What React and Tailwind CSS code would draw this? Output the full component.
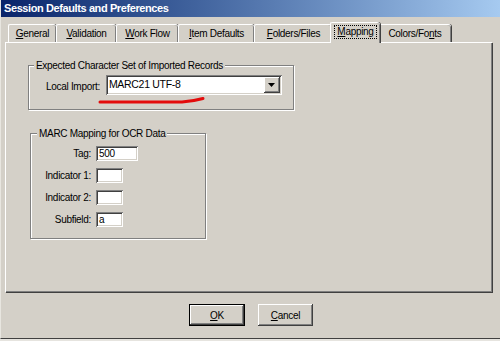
const raised = 'shadow-[inset_-1px_-1px_#404040,inset_1px_1px_#ffffff,inset_-2px_-2px_#808080,inset_2px_2px_#d4d0c8]';
const sunken = 'shadow-[inset_1px_1px_#808080,inset_-1px_-1px_#ffffff,inset_2px_2px_#404040,inset_-2px_-2px_#d4d0c8]';

const tabs = [
  { pre: '', key: 'G', post: 'eneral', w: 'w-[48px]' },
  { pre: '', key: 'V', post: 'alidation', w: 'w-[60px]' },
  { pre: '', key: 'W', post: 'ork Flow', w: 'w-[62px]' },
  { pre: '', key: 'I', post: 'tem Defaults', w: 'w-[76px]' },
  { pre: '', key: 'F', post: 'olders/Files', w: 'w-[78px]' },
  { pre: '', key: 'M', post: 'apping', w: 'w-[50px]', active: true },
  { pre: 'Colors/Fo', key: 'n', post: 'ts', w: 'w-[73px]' },
];

function Tab({ t }) {
  if (t.active) {
    return (
      <div className={`${t.w} -mx-[2px] h-[21px] -mb-px relative z-10 bg-[#d4d0c8] border-t border-l border-white rounded-tl-[2px] rounded-tr-[3px] shadow-[inset_-1px_0_#808080,1px_0_#404040] flex items-center justify-center pb-[2px]`}>
        <span className="outline-1 outline-dotted outline-black px-[2px] leading-[12px]">
          {t.pre}<span className="underline">{t.key}</span>{t.post}
        </span>
      </div>
    );
  }
  return (
    <div className={`${t.w} h-[18px] border-t border-l border-white rounded-tl-[2px] rounded-tr-[3px] shadow-[inset_-1px_0_#808080,1px_0_#404040] flex items-center justify-center`}>
      <span>{t.pre}<span className="underline">{t.key}</span>{t.post}</span>
    </div>
  );
}

function Field({ label, value, w }) {
  return (
    <div className="flex items-center h-[15px]">
      <div className="w-[65px] text-right pr-[5px]">{label}</div>
      <div className={`${w} h-[15px] bg-white ${sunken} pl-[3px] flex items-center`}>{value}</div>
    </div>
  );
}

export default function App() {
  return (
    <div className="w-[500px] h-[341px] bg-[#e6e4df] overflow-hidden font-['Liberation_Sans',Arial,sans-serif] text-[10px] tracking-[-0.3px] text-black">
      <div className="h-[339px] bg-[#d4d0c8] border-l border-l-[#e8e6e0] border-b border-b-[#404040] flex flex-col">
        {/* title bar */}
        <div className="h-[17px] bg-gradient-to-r from-[#0a246a] to-[#a6caf0] flex items-center pl-[3px]">
          <span className="text-white font-bold text-[11px] tracking-[-0.4px] leading-none">Session Defaults and Preferences</span>
        </div>

        <div className="pl-[4px] pr-[7px] pt-[7px] flex flex-col">
          {/* tabs */}
          <div className="flex items-end pl-[3px] h-[18px]">
            {tabs.map((t, i) => <Tab key={i} t={t} />)}
          </div>

          {/* panel */}
          <div className="h-[250px] border-t border-l border-white shadow-[inset_-1px_-1px_#808080,1px_1px_#404040] w-[487px] flex flex-col pl-[22px] pt-[22px]">
            <div className="relative w-[266px] h-[45px] border border-[#808080] shadow-[inset_1px_1px_#ffffff,1px_1px_#ffffff] flex items-start pl-[17px] pt-[9px]">
              <span className="absolute -top-[7px] left-[5px] px-[2px] bg-[#d4d0c8] leading-[13px]">Expected Character Set of Imported Records</span>
              <span className="mt-[4px] mr-[6px]">Local Import:</span>
              <div className={`w-[176px] h-[20px] bg-white ${sunken} flex items-center pl-[3px] pr-[2px]`}>
                <span className="flex-1 text-[10.5px]">MARC21 UTF-8</span>
                <div className={`w-[16px] h-[16px] bg-[#d4d0c8] ${raised} flex items-center justify-center`}>
                  <svg width="7" height="4" viewBox="0 0 7 4"><path d="M0 0h7L3.5 4z" fill="#000" /></svg>
                </div>
              </div>
              <svg className="absolute left-[69px] top-[30px]" width="108" height="9" viewBox="0 0 108 9">
                <path d="M2 6 L84 6 Q94 5.5 105 2.5" stroke="#e30b0b" strokeWidth="3" fill="none" strokeLinecap="round" />
              </svg>
            </div>

            <div className="relative mt-[23px] ml-[2px] w-[176px] h-[106px] border border-[#808080] shadow-[inset_1px_1px_#ffffff,1px_1px_#ffffff] flex flex-col gap-[7px] pt-[12px]">
              <span className="absolute -top-[7px] left-[6px] px-[2px] bg-[#d4d0c8] leading-[13px]">MARC Mapping for OCR Data</span>
              <Field label="Tag:" value="500" w="w-[42px]" />
              <Field label="Indicator 1:" value="" w="w-[27px]" />
              <Field label="Indicator 2:" value="" w="w-[27px]" />
              <Field label="Subfield:" value="a" w="w-[27px]" />
            </div>
          </div>
        </div>

        {/* buttons */}
        <div className="flex justify-center gap-[13px] mt-[12px] pl-[1px]">
          <div className="w-[56px] h-[22px] border border-black">
            <div className={`w-full h-full ${raised} flex items-center justify-center`}>
              <span><span className="underline">O</span>K</span>
            </div>
          </div>
          <div className={`w-[55px] h-[22px] ${raised} flex items-center justify-center`}>
            <span><span className="underline">C</span>ancel</span>
          </div>
        </div>
      </div>
    </div>
  );
}
